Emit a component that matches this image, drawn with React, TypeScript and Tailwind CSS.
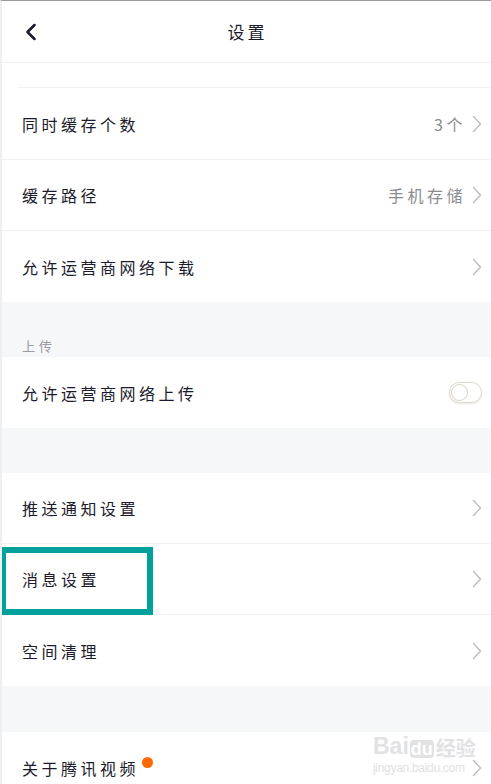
import { ChevronLeft } from 'lucide-react';

const FONT = { fontFamily: '"Noto Sans CJK SC", "Noto Sans", sans-serif' };

function Arrow() {
  return (
    <svg width="10" height="18" viewBox="0 0 10 18" fill="none" className="text-[#bdbdc2]">
      <path d="M1.5 1.5 L8.5 9 L1.5 16.5" stroke="currentColor" strokeWidth="1.4" strokeLinecap="round" strokeLinejoin="round" />
    </svg>
  );
}

function Row({
  label,
  value,
  last = false,
  height = 'h-[71px]',
  children,
}: {
  label: React.ReactNode;
  value?: string;
  last?: boolean;
  height?: string;
  children?: React.ReactNode;
}) {
  return (
    <div className={`flex ${height} items-center justify-between pl-[20px] pr-[9px] ${last ? '' : 'border-b border-[#f0f0f2]'}`}>
      <div className="text-[16px] tracking-[3.5px] text-[#1b1b2b]">{label}</div>
      <div className="flex items-center gap-[6px]">
        {value && <span className="text-[16px] tracking-[3.5px] text-[#8a8a90]">{value}</span>}
        {children ?? <Arrow />}
      </div>
    </div>
  );
}

export default function App() {
  return (
    <div className="relative h-[784px] w-[491px] overflow-hidden border-l-2 border-t border-l-[#eeeff1] border-t-[#9a9a9a] bg-[#f6f7f9]" style={FONT}>
      <header className="flex h-[62px] items-center border-b border-[#eeeef0] bg-white">
        <div className="flex w-[60px] items-center pl-[15px]">
          <ChevronLeft className="h-7 w-7 text-[#1b1b2b]" strokeWidth={2.2} />
        </div>
        <div className="flex-1 pr-[58px] text-center text-[17px] tracking-[3px] text-[#1b1b2b]">设置</div>
      </header>

      <div className="bg-white">
        <div className="ml-[16px] h-[25px] border-b border-[#f0f0f2]" />
        <Row label="同时缓存个数" value="3个" height="h-[72px]" />
        <Row label="缓存路径" value="手机存储" />
        <Row label="允许运营商网络下载" last />
      </div>

      <div className="flex h-[55px] items-end pb-[2px] pl-[20px] text-[13px] tracking-[4px] text-[#9a9aa0]">上传</div>

      <div className="bg-white">
        <Row label="允许运营商网络上传" last>
          <div className="flex h-[21px] w-[33px] items-center rounded-full border border-[#e2d8cb] bg-white p-[1px] shadow-[0_1px_2px_rgba(0,0,0,0.1)]">
            <div className="h-[17px] w-[17px] rounded-full border border-[#d9d0c4] bg-white" />
          </div>
        </Row>
      </div>

      <div className="h-[45px]" />

      <div className="bg-white">
        <Row label="推送通知设置" />
        <Row label="消息设置" />
        <Row label="空间清理" last />
      </div>

      <div className="h-[46px]" />

      <div className="bg-white">
        <Row
          label={
            <span className="relative">
              关于腾讯视频
              <span className="absolute -right-[14px] top-[1px] h-[11px] w-[11px] rounded-full bg-[#ff6a00]" />
            </span>
          }
          last
        />
      </div>

      {/* highlight frame */}
      <div className="absolute left-[-2px] top-[546px] h-[68px] w-[153px] border-[6px] border-[#00a19a]" />

      {/* watermark */}
      <div className="pointer-events-none absolute left-[371px] top-[734px] leading-none text-[#e2e2e4]" style={{ fontFamily: '"Liberation Sans", sans-serif' }}>
        <div className="flex items-end text-[23px] font-bold">
          Bai<span className="ml-[1px] rounded-[4px] bg-[#e2e2e4] px-[1px] text-[18px] text-white">du</span>
          <span className="ml-[2px] text-[20px]" style={FONT}>经验</span>
        </div>
        <div className="mt-[4px] text-[12px] tracking-[-0.3px]">jingyan.baidu.com</div>
      </div>
    </div>
  );
}
